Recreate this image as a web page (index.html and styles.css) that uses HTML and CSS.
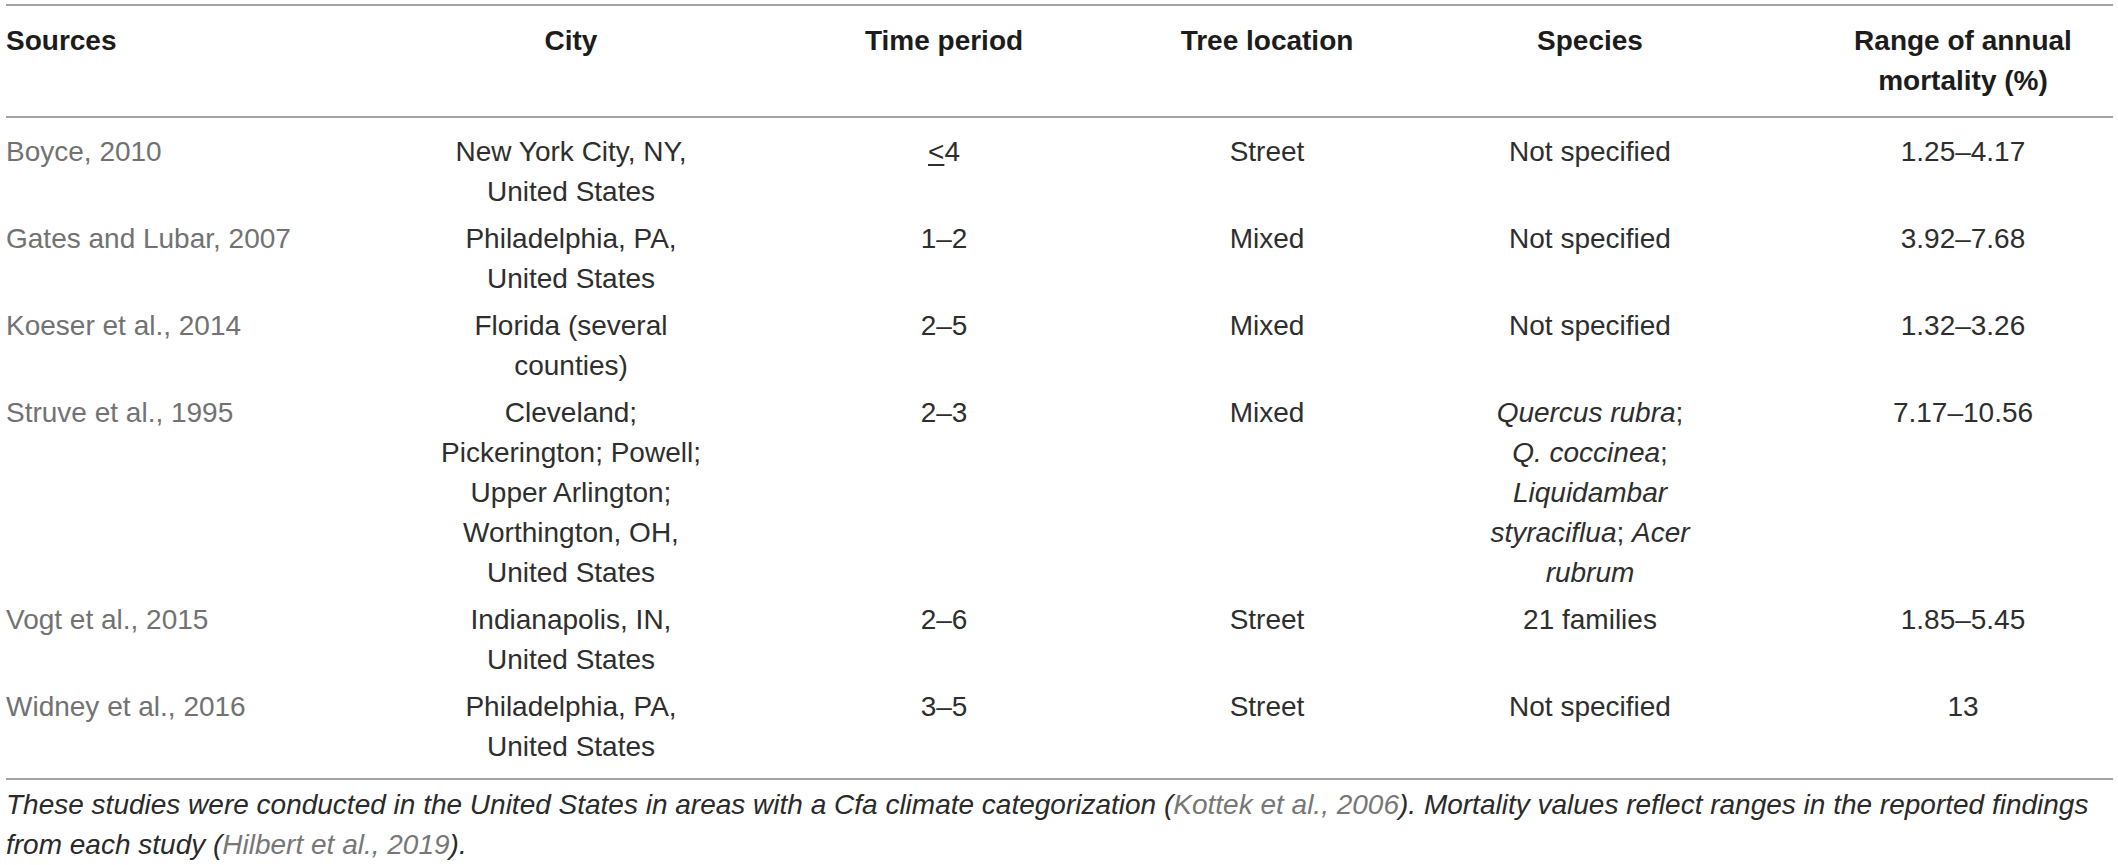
FILE: index.html
```html
<!DOCTYPE html>
<html lang="en">
<head>
<meta charset="utf-8">
<title>Annual mortality of urban trees</title>
<link rel="stylesheet" href="styles.css">
</head>
<body>
<div class="sheet">
  <table class="data">
    <colgroup>
      <col class="c-src">
      <col class="c-city">
      <col class="c-time">
      <col class="c-loc">
      <col class="c-spec">
      <col class="c-range">
    </colgroup>
    <thead>
      <tr>
        <th class="left">Sources</th>
        <th class="city">City</th>
        <th>Time period</th>
        <th>Tree location</th>
        <th class="spec">Species</th>
        <th>Range of annual mortality (%)</th>
      </tr>
    </thead>
    <tbody>
      <tr>
        <td class="src">Boyce, 2010</td>
        <td class="city">New York City, NY, United States</td>
        <td><span class="le">&lt;</span>4</td>
        <td>Street</td>
        <td class="spec">Not specified</td>
        <td>1.25–4.17</td>
      </tr>
      <tr>
        <td class="src">Gates and Lubar, 2007</td>
        <td class="city">Philadelphia, PA, United States</td>
        <td>1–2</td>
        <td>Mixed</td>
        <td class="spec">Not specified</td>
        <td>3.92–7.68</td>
      </tr>
      <tr>
        <td class="src">Koeser et al., 2014</td>
        <td class="city">Florida (several counties)</td>
        <td>2–5</td>
        <td>Mixed</td>
        <td class="spec">Not specified</td>
        <td>1.32–3.26</td>
      </tr>
      <tr>
        <td class="src">Struve et al., 1995</td>
        <td class="city">Cleveland; Pickerington; Powell; Upper Arlington; Worthington, OH, United States</td>
        <td>2–3</td>
        <td>Mixed</td>
        <td class="spec"><i>Quercus rubra</i>; <i>Q. coccinea</i>; <i>Liquidambar styraciflua</i>; <i>Acer rubrum</i></td>
        <td>7.17–10.56</td>
      </tr>
      <tr>
        <td class="src">Vogt et al., 2015</td>
        <td class="city">Indianapolis, IN, United States</td>
        <td>2–6</td>
        <td>Street</td>
        <td class="spec">21 families</td>
        <td>1.85–5.45</td>
      </tr>
      <tr>
        <td class="src">Widney et al., 2016</td>
        <td class="city">Philadelphia, PA, United States</td>
        <td>3–5</td>
        <td>Street</td>
        <td class="spec">Not specified</td>
        <td>13</td>
      </tr>
    </tbody>
  </table>
  <p class="note">These studies were conducted in the United States in areas with a Cfa climate categorization (<span class="cite">Kottek et al., 2006</span>). Mortality values reflect ranges in the reported findings from each study (<span class="cite">Hilbert et al., 2019</span>).</p>
</div>
</body>
</html>
```

FILE: styles.css
```css
html, body {
  margin: 0;
  padding: 0;
  background: #ffffff;
}

body {
  font-family: "Liberation Sans", Arial, sans-serif;
  font-size: 28px;
  line-height: 40px;
  color: #2a2a2a;
}

.sheet {
  padding: 4px 0 0 6px;
  width: 2107px;
}

.data {
  width: 2107px;
  table-layout: fixed;
  border-collapse: separate;
  border-spacing: 0;
}

.c-src { width: 415px; }
.c-city { width: 300px; }
.c-time { width: 446px; }
.c-loc { width: 200px; }
.c-spec { width: 446px; }
.c-range { width: 300px; }

.data th {
  font-weight: 700;
  color: #1c1c1c;
  text-align: center;
  vertical-align: top;
  padding: 15px 0;
  border-top: 2px solid #a3a3a3;
  border-bottom: 2px solid #a3a3a3;
}

.data th.left {
  text-align: left;
}

.data td {
  font-weight: 400;
  color: #2e2e2e;
  text-align: center;
  vertical-align: top;
  padding: 4px 0 3px;
}

.data td.src {
  text-align: left;
  color: #727272;
}

.data .city {
  padding-left: 15px;
  padding-right: 15px;
}

.data .spec {
  padding-left: 118px;
  padding-right: 118px;
}

.data tbody tr:first-child td {
  padding-top: 14px;
}

.data tbody tr:last-child td {
  padding-bottom: 11px;
  border-bottom: 2px solid #a3a3a3;
}

.le {
  text-decoration: underline;
  text-underline-offset: 3px;
}

.note {
  margin: 0;
  padding-top: 5px;
  font-style: italic;
  color: #2a2a2a;
}

.cite {
  color: #777777;
}
```
